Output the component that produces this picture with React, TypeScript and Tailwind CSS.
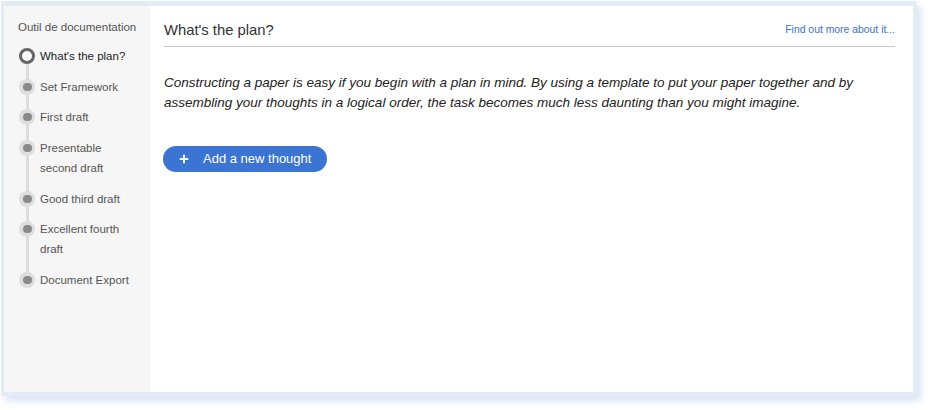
import { Plus } from "lucide-react";

const steps = [
  { label: "What's the plan?", active: true },
  { label: "Set Framework" },
  { label: "First draft" },
  { label: "Presentable second draft" },
  { label: "Good third draft" },
  { label: "Excellent fourth draft" },
  { label: "Document Export" },
];

const StepDot = ({ active }: { active?: boolean }) =>
  active ? (
    <div className="h-[16px] w-[16px] rounded-full border-[3px] border-[#666] bg-white" />
  ) : (
    <div className="flex h-[16px] w-[16px] items-center justify-center rounded-full bg-[#dedede]">
      <div className="h-[8px] w-[9px] rounded-full bg-[#8a8a8a]" />
    </div>
  );

const Sidebar = () => (
  <div className="w-[146px] shrink-0 bg-[#f6f6f6] pl-[14px] pr-[8px] pt-[13px]">
    <div className="text-[11.5px] leading-[16px] text-[#555]">Outil de documentation</div>
    <div className="relative mt-[11px] flex flex-col gap-[10.7px]">
      <div className="absolute bottom-[10px] left-[8px] top-[10px] w-[3px] bg-[#dcdcdc]" />
      {steps.map((s) => (
        <div key={s.label} className="relative flex items-start gap-[4px]">
          <div className="flex h-[20px] w-[18px] shrink-0 items-center justify-center">
            <StepDot active={s.active} />
          </div>
          <div
            className={
              s.active
                ? "max-w-[92px] text-[11.5px] leading-[20px] text-[#222]"
                : "max-w-[92px] text-[11.5px] leading-[20px] text-[#555]"
            }
          >
            {s.label}
          </div>
        </div>
      ))}
    </div>
  </div>
);

export default function App() {
  return (
    <div className="h-[410px] w-[932px] bg-white pl-[1px] pt-[1px] font-['Liberation_Sans',Arial,sans-serif]">
      <div className="h-[395px] w-[916px] rounded-[2px] bg-[#e2ebf6] pb-[4px] pl-[3px] pr-[4px] pt-[5px] shadow-[4px_5px_7px_rgba(200,218,240,0.7)]">
        <div className="flex h-full">
          <Sidebar />
          <div className="flex-1 bg-white pl-[14px] pr-[18px] pt-[13px]">
            <div className="flex items-center justify-between border-b border-[#c8c8c8] pb-[6px]">
              <div className="text-[14.8px] leading-[20px] text-[#333]">What's the plan?</div>
              <a className="pt-[1px] text-[10.4px] leading-[20px] text-[#3a6fc9]">Find out more about it...</a>
            </div>
            <p className="mt-[26px] text-[13.5px] italic leading-[20px] text-[#222]">
              Constructing a paper is easy if you begin with a plan in mind. By using a template to put your paper
              together and by assembling your thoughts in a logical order, the task becomes much less daunting than
              you might imagine.
            </p>
            <button className="-ml-[1px] mt-[33px] flex h-[26px] items-center gap-[13px] rounded-full bg-[#3b74d3] pl-[15px] pr-[16px] text-[13px] text-white">
              <Plus size={12} strokeWidth={4} />
              <span>Add a new thought</span>
            </button>
          </div>
        </div>
      </div>
    </div>
  );
}
